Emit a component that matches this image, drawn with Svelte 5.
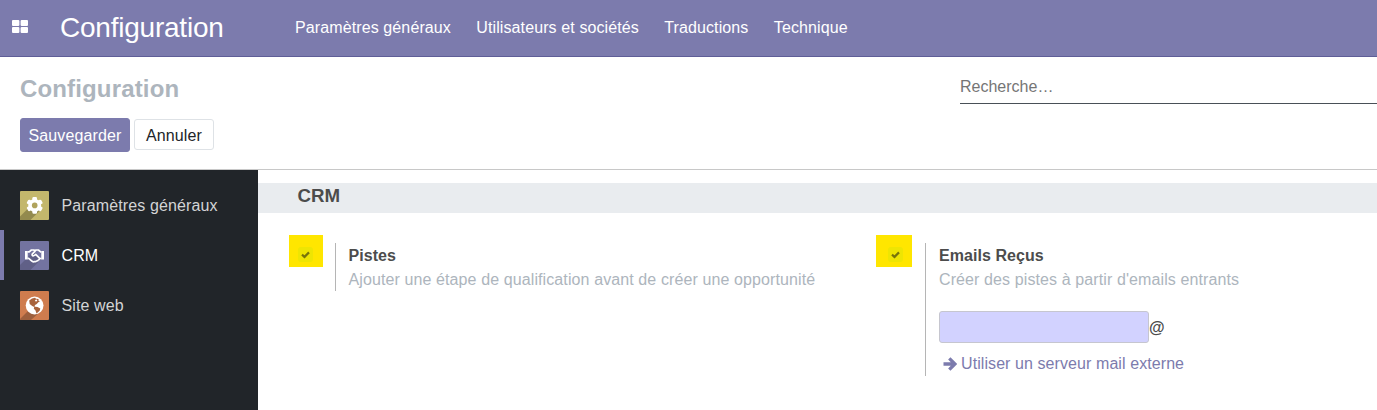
<script>
  const menus = ['Paramètres généraux', 'Utilisateurs et sociétés', 'Traductions', 'Technique'];
  const tabs = [
    { label: 'Paramètres généraux', icon: 'gear' },
    { label: 'CRM', icon: 'handshake', active: true },
    { label: 'Site web', icon: 'globe' }
  ];
</script>

{#snippet check()}
  <span class="marker">
    <span class="box">
      <svg width="9" height="8" viewBox="0 0 9 8"><path d="M1 3.700 3.500 5.900 8 1.400" fill="none" stroke="#77740a" stroke-width="2.200" /></svg>
    </span>
  </span>
{/snippet}

<div class="app">
  <header class="navbar">
    <svg class="apps" width="16" height="13" viewBox="0 0 16 13" fill="#fff">
      <rect width="7.400" height="6" rx="1" /><rect x="8.600" width="7.400" height="6" rx="1" />
      <rect y="7" width="7.400" height="6" rx="1" /><rect x="8.600" y="7" width="7.400" height="6" rx="1" />
    </svg>
    <span class="brand">Configuration</span>
    <nav>
      {#each menus as m}<a>{m}</a>{/each}
    </nav>
  </header>

  <section class="panel">
    <div class="left">
      <h1>Configuration</h1>
      <div class="buttons">
        <button class="save">Sauvegarder</button>
        <button class="cancel">Annuler</button>
      </div>
    </div>
    <div class="search">Recherche…</div>
  </section>

  <main>
    <aside>
      {#each tabs as t}
        <div class="tab" class:active={t.active}>
          <svg class="icon" width="29" height="29" viewBox="0 0 29 29">
            {#if t.icon === 'gear'}
              <rect width="29" height="29" rx="1" fill="#c3b76c" />
              <path d="M8 17.500 0 25.500V28a1 1 0 0 0 1 1h9.500L20.500 19 15 10z" fill="#938a4e" />
              <g fill="#fff" transform="translate(14.700 14.400)">
                {#each [0, 60, 120] as a}
                  <rect x="-2.300" y="-8.300" width="4.600" height="16.600" rx="1.200" transform="rotate({a})" />
                {/each}
                <circle r="6.400" />
              </g>
              <circle cx="14.700" cy="14.400" r="2.800" fill="#b0a35c" />
            {:else if t.icon === 'handshake'}
              <rect width="29" height="29" rx="1" fill="#7373a0" />
              <path d="M5.500 18.500 0 24v4a1 1 0 0 0 1 1h9.500L21 18.500 14 10z" fill="#606087" />
              <path d="M5 10h2.700v8.500H5zM21.300 10H24v8.500h-2.700z" fill="#fff" />
              <path d="M7.500 10.800h1.700l2.200-1.800h2.300l1.200.8 1.200-.8h2.300l2.200 1.800h.7M7.500 17.300h1.200l3.500 3q1.200.9 2.300.2 1.200.5 2.100-.5 1.300.1 1.700-1 1.200-.1 1.500-1.500h1.700M15.400 9.800l-3.200 3.300q-.4 1.600 1 1.700 1.200 0 2.500-1.500l4 4" fill="none" stroke="#fff" stroke-width="1.700" stroke-linejoin="round" />
            {:else}
              <rect width="29" height="29" rx="1" fill="#cf7c4e" />
              <path d="M8 20 0 28a1 1 0 0 0 1 1h10l10-9-6-10z" fill="#9d5f3d" />
              <circle cx="14.600" cy="14.500" r="8.900" fill="#fff" />
              <path d="M9.200 9.600 12 7.500l3-.7 1 1 2.600.2-.2 1.500 1.500 1-1.600.8-1.500 1.800-1.400.6-1.100 1.500 1 .5 2.200.2 2.800 1.600-.5 1.900-1.500 1.500-1.800 1.500-1-2.800-1.700-1.900.4-1.700-2-1-2.500-2z" fill="#a9633c" />
              <path d="m14.800 9 2-.5.500 1.300-1.400 1z" fill="#fff" />
            {/if}
          </svg>
          <span>{t.label}</span>
        </div>
      {/each}
    </aside>

    <div class="settings">
      <h2>CRM</h2>
      <div class="grid">
        <div class="setting">
          {@render check()}
          <div class="body">
            <b>Pistes</b>
            <p>Ajouter une étape de qualification avant de créer une opportunité</p>
          </div>
        </div>
        <div class="setting second">
          {@render check()}
          <div class="body">
            <b>Emails Reçus</b>
            <p>Créer des pistes à partir d'emails entrants</p>
            <div class="alias"><input aria-label="Alias" /><b>@</b></div>
            <a class="link">
              <svg width="14" height="14" viewBox="0 0 14 14"><path d="M0.500 7H11M6.300 1.400 11.900 7 6.300 12.600" fill="none" stroke="#7c7bad" stroke-width="3.300" /></svg>
              <span>Utiliser un serveur mail externe</span>
            </a>
          </div>
        </div>
      </div>
    </div>
  </main>
</div>

<style>
  :global(body) { overflow: hidden; }
  * { box-sizing: border-box; }
  .app {
    width: 1377px; height: 410px; display: flex; flex-direction: column; overflow: hidden;
    background: #fff; color: #4c4c4c; font: 16px/24px "Liberation Sans", Arial, sans-serif;
  }
  .navbar {
    height: 57px; flex: none; display: flex; align-items: center; padding: 0 0 2px 12px;
    background: #7c7bad; border-bottom: 1px solid #5f5e97; color: #fff;
  }
  .apps { flex: none; margin-bottom: 1px; }
  .brand { width: 234px; margin: 2px 0 0 32px; font-size: 28px; line-height: 40px; letter-spacing: -0.23px; }
  nav { display: flex; gap: 25.300px; margin: 2px 0 0 1px; white-space: nowrap; letter-spacing: 0.110px; }
  .panel { height: 113px; flex: none; display: flex; border-bottom: 1px solid #c8c8c8; }
  .left { width: 960px; padding: 17px 0 0 20px; }
  h1 { margin: 0; font-size: 24px; line-height: 30px; letter-spacing: 0.150px; color: #adb5bd; }
  .buttons { display: flex; align-items: flex-start; gap: 4px; margin-top: 14px; }
  button { font: inherit; padding: 1px 0 0; border-radius: 3px; letter-spacing: 0.130px; }
  .save { width: 110px; height: 34px; border: 1px solid #7c7bad; background: #7c7bad; color: #fff; }
  .cancel { width: 80px; height: 31px; margin-top: 1px; padding-top: 2px; border: 1px solid #dee2e6; background: #fff; color: #212529; }
  .search { flex: 1; height: 47px; padding-top: 18px; border-bottom: 1px solid #495057; color: #757575; }
  main { flex: 1; display: flex; }
  aside { width: 258px; flex: none; padding-top: 10px; background: #212529; }
  .tab { height: 50px; display: flex; align-items: center; padding-left: 20px; color: #d3d4d5; }
  .tab.active { padding-left: 16px; border-left: 4px solid #7c7bad; color: #fff; }
  .tab span { padding-top: 2px; letter-spacing: 0.120px; }
  .icon { margin-right: 12.500px; }
  .settings { flex: 1; padding-top: 13px; }
  h2 { height: 30px; margin: 0; padding-left: 39.500px; background: #e9ecef; font-size: 18.700px; line-height: 26px; }
  .grid { display: flex; padding: 22px 0 0 31px; }
  .setting { width: 587px; display: flex; align-items: flex-start; }
  .marker { width: 34px; height: 32px; flex: none; padding: 12px 0 0 9px; background: #ffe600; }
  .box { width: 15px; height: 15px; display: flex; align-items: center; justify-content: center; border-radius: 3px; background: #eee503; }
  .second .marker { width: 36px; padding-left: 12px; }
  .body { margin: 8px 0 0 12px; padding: 1px 0 0 12.500px; border-left: 1px solid #b5b5b5; white-space: nowrap; }
  .setting:first-child .body { height: 48px; }
  .second .body { margin-left: 13px; padding-left: 13px; }
  .body > b { display: block; letter-spacing: 0.060px; }
  p { margin: 0; letter-spacing: 0.105px; color: #adb5bd; }
  .alias { display: flex; align-items: center; margin-top: 19px; }
  .alias b { padding-top: 2px; }
  input { width: 210px; height: 32px; border: 1px solid #c6c6cf; border-radius: 3px; background: #d2d2ff; }
  .link { display: flex; align-items: center; gap: 4px; height: 33px; padding: 8px 0 0 4px; letter-spacing: 0.080px; color: #7c7bad; }
</style>
